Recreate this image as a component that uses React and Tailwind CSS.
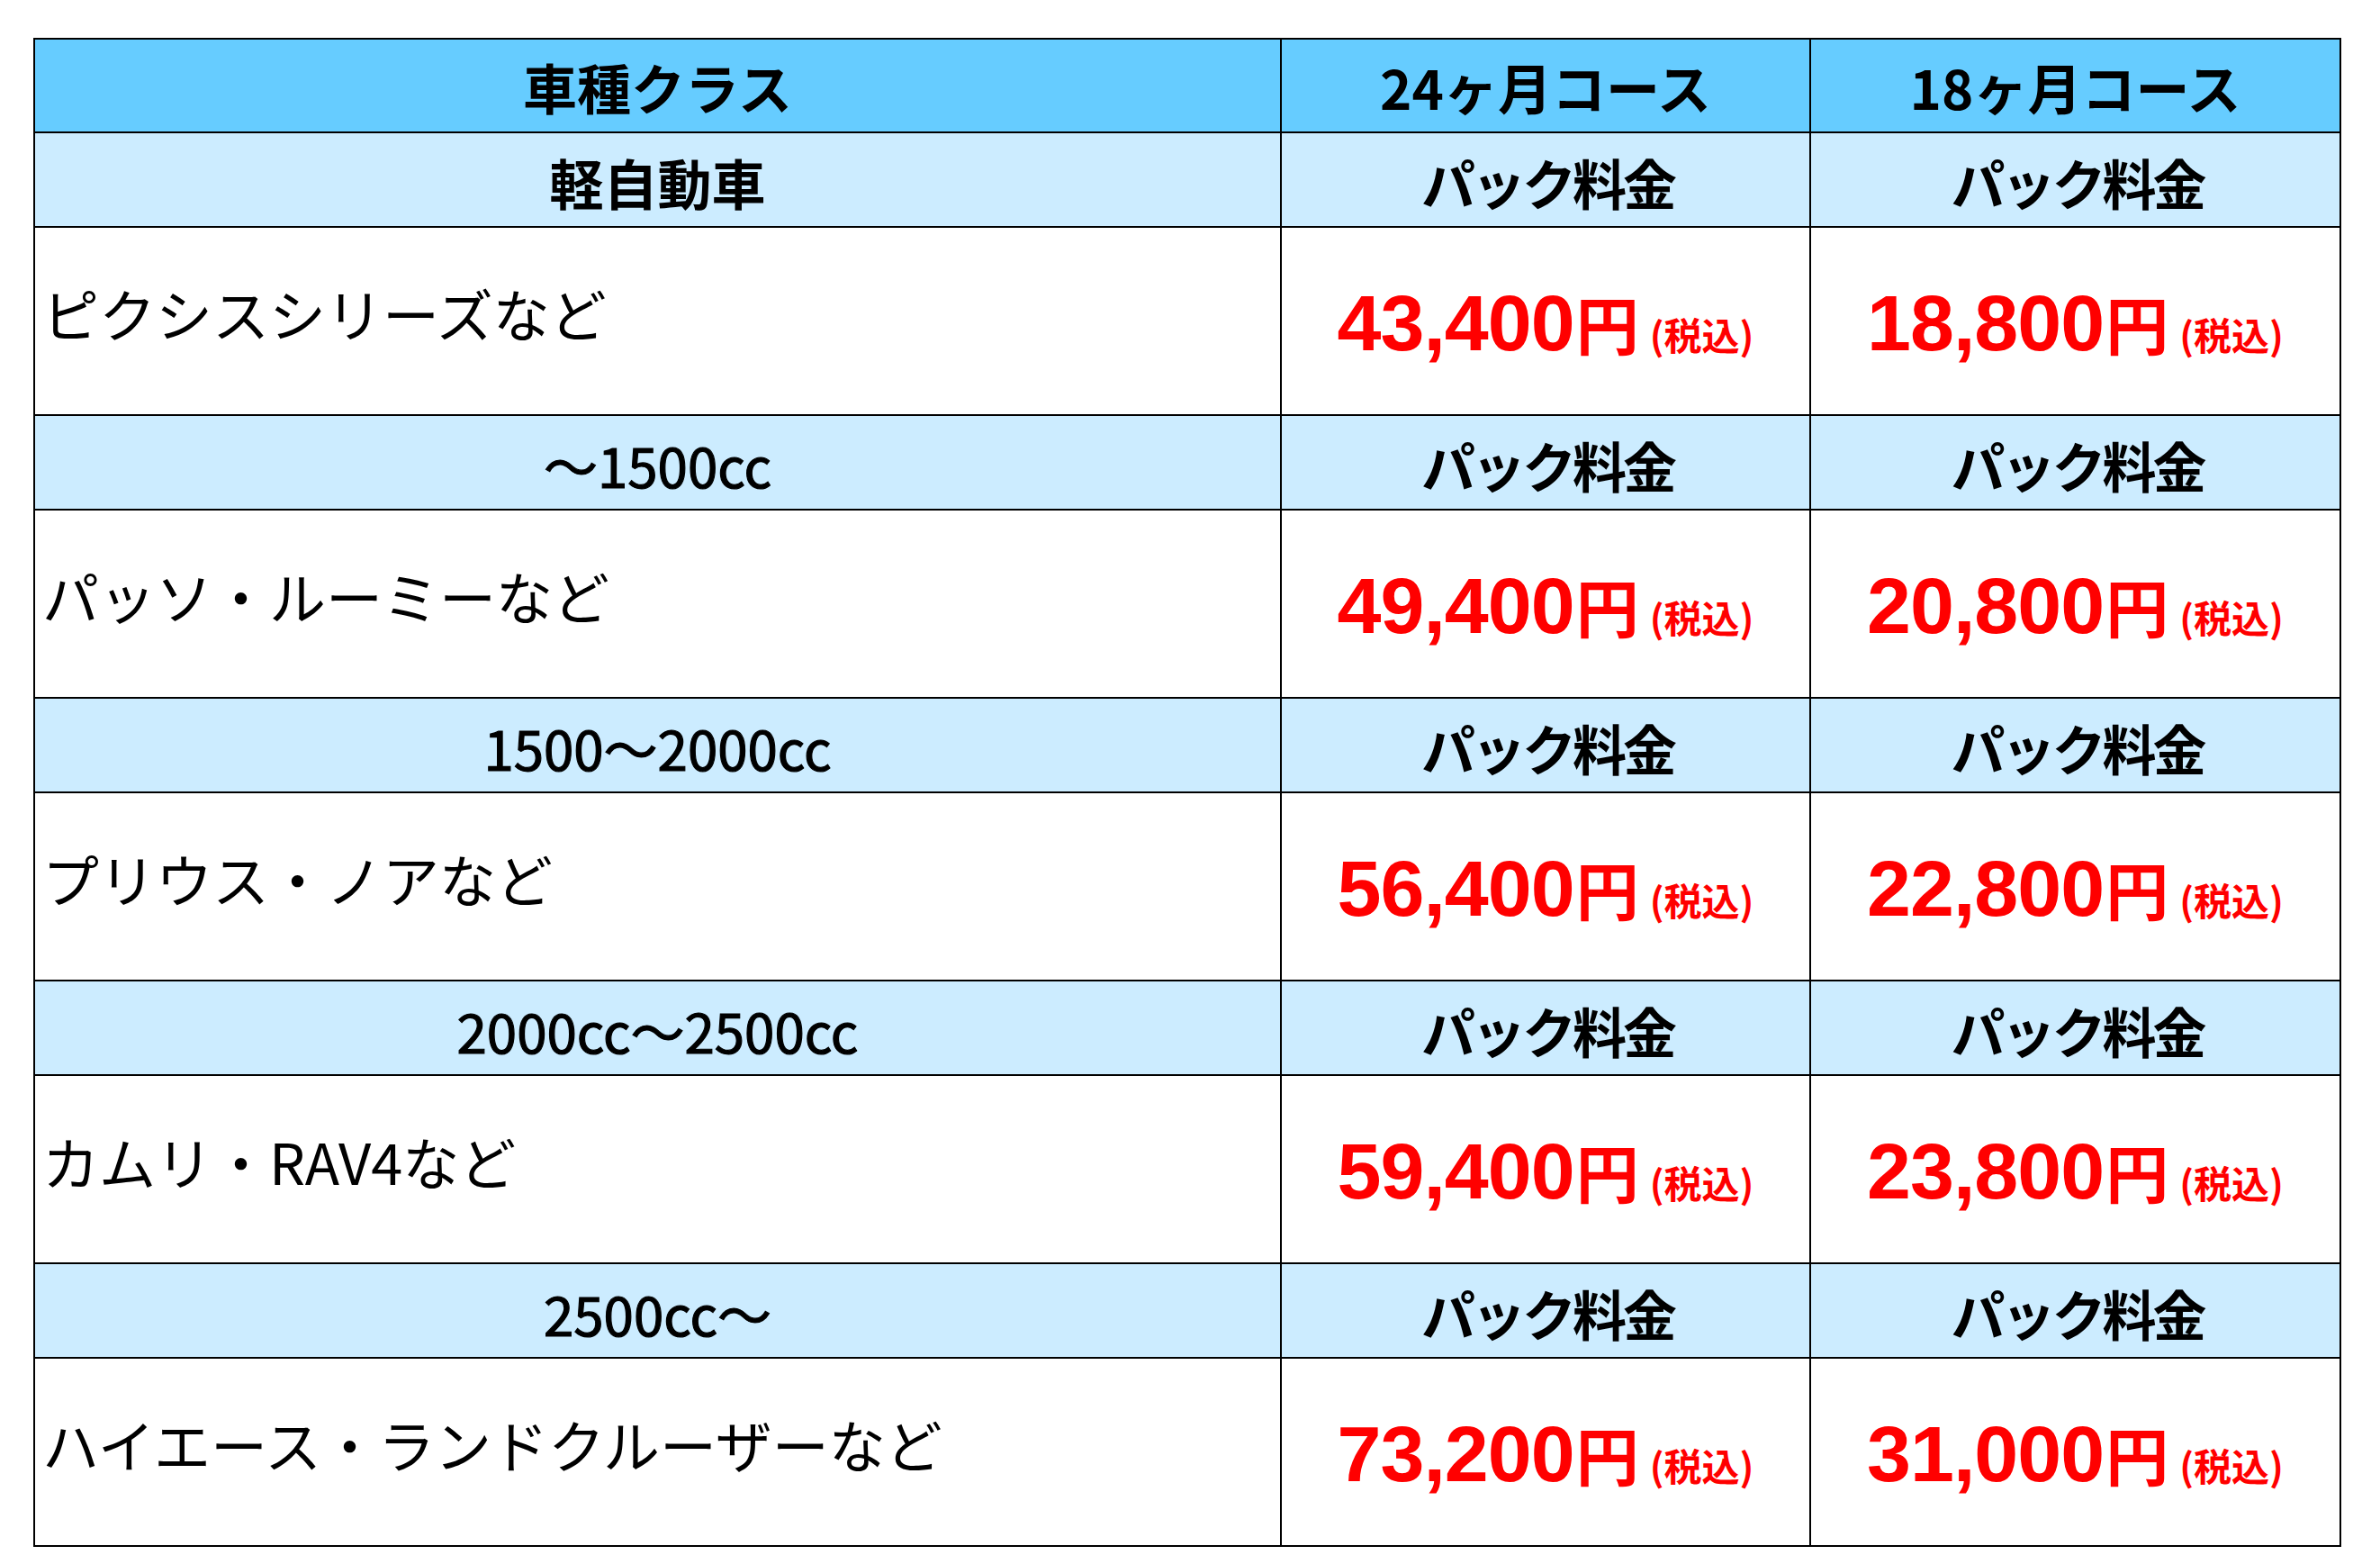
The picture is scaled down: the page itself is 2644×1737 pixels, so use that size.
const rows = [
  { cls: "軽自動車", name: "ピクシスシリーズなど", p24: "43,400", p18: "18,800", heavy: true },
  { cls: "〜1500cc", name: "パッソ・ルーミーなど", p24: "49,400", p18: "20,800" },
  { cls: "1500〜2000cc", name: "プリウス・ノアなど", p24: "56,400", p18: "22,800" },
  { cls: "2000cc〜2500cc", name: "カムリ・RAV4など", p24: "59,400", p18: "23,800" },
  { cls: "2500cc〜", name: "ハイエース・ランドクルーザーなど", p24: "73,200", p18: "31,000" },
];

function Price({ value }) {
  return (
    <div className="flex h-full items-center justify-center border-l-2 border-black pt-[4px] font-bold text-[#ff0000]">
      <div className="flex items-baseline">
        <span className="font-['Liberation_Sans',sans-serif] text-[88px] leading-none tracking-[-1px]">{value}</span>
        <span className="ml-[2px] font-['Noto_Sans_CJK_JP',sans-serif] text-[70px] leading-none">円</span>
        <span className="ml-[12px] font-['Noto_Sans_CJK_JP',sans-serif] text-[42px] leading-none">(税込)</span>
      </div>
    </div>
  );
}

function Pack() {
  return (
    <div className="flex items-center justify-center border-l-2 border-black pt-[4px] pl-[4px] font-bold tracking-[-4px]">
      パック料金
    </div>
  );
}

export default function App() {
  return (
    <div className="min-h-screen bg-white pt-[42px] pl-[37px] font-['Noto_Sans_CJK_JP',sans-serif] text-black">
      <div className="w-[2564px] border-2 border-black">
        {/* header */}
        <div className="grid h-[102px] grid-cols-[1383px_588px_1fr] bg-[#66ccff] text-[60px] font-bold leading-none">
          <div className="flex items-center justify-center pt-[2px]">車種クラス</div>
          <div className="flex items-center justify-center border-l-2 border-black pt-[2px]">24ヶ月コース</div>
          <div className="flex items-center justify-center border-l-2 border-black pt-[2px]">18ヶ月コース</div>
        </div>

        {rows.map((r) => (
          <div key={r.cls}>
            <div className="grid h-[105px] grid-cols-[1383px_588px_1fr] border-t-2 border-black bg-[#ccecff] text-[60px] leading-none">
              <div
                className={`flex items-center justify-center pt-[4px] ${
                  r.heavy ? "font-bold" : "font-normal [-webkit-text-stroke:1.2px_black]"
                }`}
              >
                {r.cls}
              </div>
              <Pack />
              <Pack />
            </div>
            <div className="grid h-[209px] grid-cols-[1383px_588px_1fr] border-t-2 border-black bg-white">
              <div className="flex items-center pb-[20px] pl-[8px] text-[63px] leading-none">{r.name}</div>
              <Price value={r.p24} />
              <Price value={r.p18} />
            </div>
          </div>
        ))}
      </div>
    </div>
  );
}
